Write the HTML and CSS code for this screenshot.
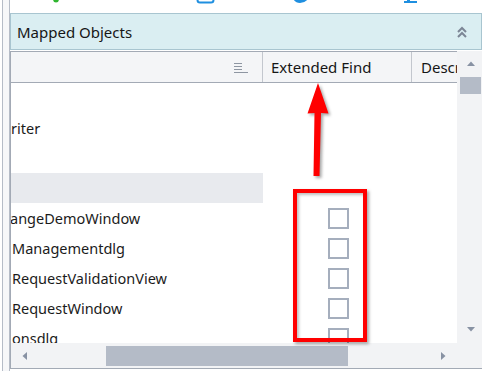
FILE: index.html
```html
<!DOCTYPE html>
<html>
<head>
<meta charset="utf-8">
<title>Mapped Objects</title>
<link rel="stylesheet" href="styles.css">
</head>
<body>
<div class="frame">
  <div class="gutter"></div>
  <div class="main">
    <div class="toolbar">
      <svg class="tb tb-green" width="6" height="4" viewBox="0 0 6 4"><ellipse cx="3" cy="-1" rx="3" ry="3.5" fill="#2fb52f"/></svg>
      <svg class="tb tb-b1" width="19" height="4" viewBox="0 0 19 4"><path d="M1.5 -3 V0 Q1.5 2.5 4 2.5 H15 Q17.5 2.5 17.5 0 V-3" fill="none" stroke="#1f8fe0" stroke-width="2"/></svg>
      <svg class="tb tb-b2" width="18" height="4" viewBox="0 0 18 4"><path d="M1 -4 Q3 3 9 3 Q14 3 17 -1 L17 -4 Z" fill="#1f8fe0"/></svg>
      <svg class="tb tb-b3" width="15" height="4" viewBox="0 0 15 4"><path d="M4 -4 H7 V1 H14 V3 H1 V1 H4 Z" fill="#1f8fe0"/></svg>
    </div>
    <div class="panel-head">
      <span class="title">Mapped Objects</span>
      <svg class="collapse" width="10" height="12" viewBox="0 0 10 12"><path d="M1 6 L5 2 L9 6 M1 11 L5 7 L9 11" fill="none" stroke="#7c8696" stroke-width="2"/></svg>
    </div>
    <div class="grid">
      <div class="content">
        <div class="hdr">
          <div class="hc c1"><svg class="sort" width="14" height="11" viewBox="0 0 14 11"><path d="M0 1.5 H8 M0 4.5 H8 M0 7.5 H8 M0 10.5 H14" stroke="#8e96a2" stroke-width="1"/></svg></div>
          <div class="hc c2">Extended Find</div>
          <div class="hc c3">Description</div>
        </div>
        <div class="row"><div class="c1"></div><div class="c2"></div></div>
        <div class="row"><div class="c1"><span class="t t-riter">riter</span></div><div class="c2"></div></div>
        <div class="row"><div class="c1"></div><div class="c2"></div></div>
        <div class="row sel"><div class="c1"></div><div class="c2"></div></div>
        <div class="row"><div class="c1"><span class="t t-ange">angeDemoWindow</span></div><div class="c2"><span class="cb"></span></div></div>
        <div class="row"><div class="c1"><span class="t">Managementdlg</span></div><div class="c2"><span class="cb"></span></div></div>
        <div class="row"><div class="c1"><span class="t">RequestValidationView</span></div><div class="c2"><span class="cb"></span></div></div>
        <div class="row"><div class="c1"><span class="t">RequestWindow</span></div><div class="c2"><span class="cb"></span></div></div>
        <div class="row"><div class="c1"><span class="t t-ons">onsdlg</span></div><div class="c2"><span class="cb"></span></div></div>
      </div>
      <div class="vscroll">
        <svg class="arr" width="8" height="5" viewBox="0 0 8 5"><path d="M0 5 L4 0.5 L8 5 Z" fill="#8892a3"/></svg>
        <div class="vthumb"></div>
        <div class="vspace"></div>
        <svg class="arr" width="8" height="5" viewBox="0 0 8 5"><path d="M0 0 L4 4.5 L8 0 Z" fill="#8892a3"/></svg>
      </div>
      <div class="hscroll">
        <svg class="harr" width="5" height="8" viewBox="0 0 5 8"><path d="M5 0 L0.5 4 L5 8 Z" fill="#8892a3"/></svg>
        <div class="hthumb"></div>
        <svg class="harr harr-r" width="5" height="8" viewBox="0 0 5 8"><path d="M0 0 L4.5 4 L0 8 Z" fill="#8892a3"/></svg>
      </div>
      <div class="corner"></div>
    </div>
  </div>
</div>
<div class="annot-box"></div>
<svg class="annot-arrow" width="482" height="371" viewBox="0 0 482 371">
  <path d="M318 83 L328.5 113.5 L321 113 L319.5 176 L313.5 176 L314.5 113 L307.5 113.5 Z" fill="#ff0000"/>
</svg>
</body>
</html>
```

FILE: styles.css
```css
* { box-sizing: border-box; }
html, body { margin: 0; padding: 0; }
body {
  width: 482px;
  height: 371px;
  overflow: hidden;
  background: #ffffff;
  font-family: "Noto Sans", "Open Sans", sans-serif;
  color: #1b1b1b;
  position: relative;
}
.frame { display: flex; height: 371px; }
.gutter {
  width: 8px;
  margin-left: 2px;
  border-left: 1px solid #b5bcc7;
  border-right: 1px solid #b5bcc7;
  background: #f6f7f9;
}
.main { flex: 1; display: flex; flex-direction: column; min-width: 0; }

.toolbar { height: 13px; display: flex; align-items: flex-start; }
.tb { display: block; }
.tb-green { margin-left: 43px; }
.tb-b1 { margin-left: 137px; }
.tb-b2 { margin-left: 76px; }
.tb-b3 { margin-left: 94px; }

.panel-head {
  height: 37px;
  border: 1px solid #a8c5d0;
  background: #daeef2;
  display: flex;
  align-items: center;
  justify-content: space-between;
  padding: 0 14px 0 6px;
}
.title { font-size: 15px; color: #161616; }
.collapse { display: block; margin-top: 1px; }

.grid {
  margin-top: 1px;
  margin-bottom: 2px;
  flex: 1;
  display: grid;
  grid-template-columns: 1fr 25px;
  grid-template-rows: 1fr 25px;
  border-left: 1px solid #a3aab5;
  border-bottom: 1px solid #a3aab5;
  min-height: 0;
}
.content {
  border-top: 1px solid #a3aab5;
  overflow: hidden;
  min-width: 0;
  min-height: 0;
}
.hdr {
  height: 31px;
  display: flex;
  background: #f4f5f7;
  border-bottom: 1px solid #a3aab5;
  font-size: 15px;
  color: #161616;
}
.hc { display: flex; align-items: center; white-space: nowrap; overflow: hidden; }
.hdr .c1 { width: 252px; border-right: 1px solid #c3c7ce; justify-content: flex-end; padding-right: 14px; }
.hdr .c2 { width: 149px; border-right: 1px solid #c3c7ce; padding-left: 8px; }
.hdr .c3 { flex: 1; padding-left: 9px; }
.sort { display: block; margin-top: 1px; }

.row { height: 30px; display: flex; font-size: 14.5px; }
.row .c1 { width: 252px; display: flex; align-items: center; padding-left: 1px; white-space: nowrap; overflow: hidden; }
.row .c2 { width: 149px; display: flex; align-items: center; justify-content: center; padding-left: 1px; }
.row.sel .c1 { background: #e8eaee; }
.t-riter { margin-left: -1px; }
.t-ange { margin-left: -2px; }
.cb {
  width: 21px;
  height: 21px;
  border: 2px solid #a5aebd;
  background: #fff;
  display: block;
}

.vscroll {
  background: #f2f3f5;
  display: flex;
  flex-direction: column;
  align-items: flex-start;
  padding: 10px 0 11px 0;
}
.vscroll .arr { display: block; margin-left: 10px; }
.vthumb { width: 21px; height: 17px; background: #b4bbc7; margin-left: 3px; margin-top: 11px; }
.vspace { flex: 1; }

.hscroll {
  background: #f2f3f5;
  display: flex;
  align-items: center;
  padding-left: 11px;
}
.harr { display: block; }
.hthumb { width: 242px; height: 20px; background: #b4bbc7; margin-left: 79px; margin-top: 1px; }
.harr-r { margin-left: 93px; }
.corner { background: #f2f3f5; }

.annot-box {
  position: absolute;
  left: 293px;
  top: 189px;
  width: 74px;
  height: 153px;
  border: 4px solid #ff0000;
  box-shadow: 2px 2px 3px rgba(0,0,0,0.35), inset 2px 2px 3px rgba(0,0,0,0.25);
}
.annot-arrow {
  position: absolute;
  left: 0;
  top: 0;
  pointer-events: none;
  filter: drop-shadow(2px 2px 1.5px rgba(0,0,0,0.35));
}
```
